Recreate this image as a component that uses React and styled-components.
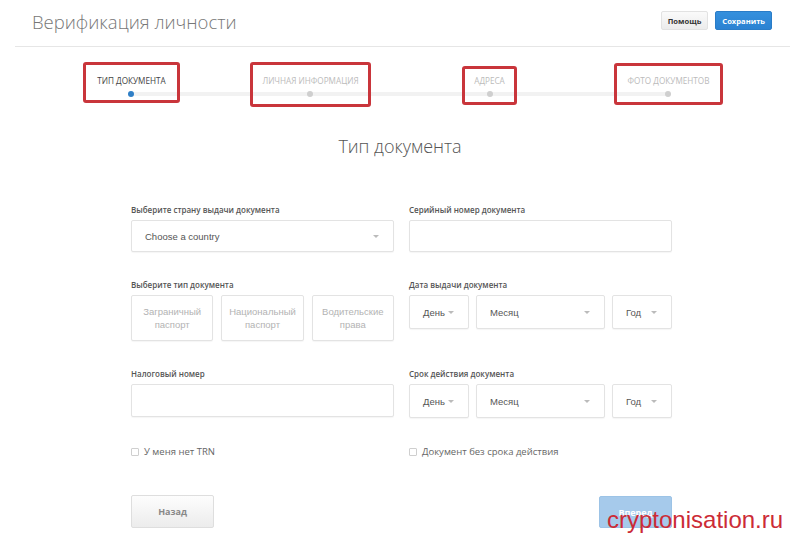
import styled, { createGlobalStyle } from 'styled-components';

const GlobalStyle = createGlobalStyle`
  html, body {
    margin: 0;
    padding: 0;
    background: #fff;
  }

  body {
    font-family: "Open Sans", "Noto Sans", sans-serif;
    color: #555;
  }

  * {
    box-sizing: border-box;
  }
`;

const Page = styled.div`
  position: relative;
  width: 800px;
  height: 546px;
  overflow: hidden;
`;

const Header = styled.header`
  display: flex;
  justify-content: space-between;
  align-items: flex-start;
  height: 47px;
  margin: 0 10px 0 15px;
  padding: 0 18px 0 17px;
  border-bottom: 1px solid #e6e6e6;
`;

const Title = styled.h1`
  margin: 0;
  padding-top: 9px;
  font-size: 18.5px;
  line-height: 26px;
  font-weight: 300;
  color: #777;
`;

const HeaderActions = styled.div`
  display: flex;
  gap: 7px;
  margin-top: 11px;
`;

const SmallButton = styled.button`
  height: 19px;
  padding: 0 ${({ $primary }) => ($primary ? '6px' : '6px')};
  border: 1px solid ${({ $primary }) => ($primary ? '#2a7cc7' : '#e2e2e2')};
  border-radius: 2px;
  background: ${({ $primary }) =>
    $primary ? 'linear-gradient(#3590dd, #2b82d2)' : 'linear-gradient(#fafafa, #ececec)'};
  color: ${({ $primary }) => ($primary ? '#fff' : '#333')};
  font-family: "Open Sans", sans-serif;
  font-size: 7.6px;
  font-weight: 700;
  cursor: pointer;
`;

const Steps = styled.ol`
  position: relative;
  display: flex;
  width: 716px;
  margin: 28px auto 0;
  padding: 0;
  list-style: none;

  &::before {
    content: '';
    position: absolute;
    left: 89px;
    right: 89px;
    top: 17px;
    height: 4px;
    background: #f2f2f2;
  }
`;

const Step = styled.li`
  flex: 1;
  display: flex;
  justify-content: center;
`;

const StepInner = styled.div`
  position: relative;
  display: flex;
  flex-direction: column;
  align-items: center;
  gap: 4px;
`;

const StepLabel = styled.span`
  font-size: 8.2px;
  line-height: 12px;
  text-transform: uppercase;
  white-space: nowrap;
  color: ${({ $active }) => ($active ? '#444' : '#bbb')};
`;

const StepDot = styled.span`
  position: relative;
  width: 6px;
  height: 6px;
  border-radius: 50%;
  background: ${({ $active }) => ($active ? '#2f7fc6' : '#cfcfcf')};
`;

const Annotation = styled.span`
  position: absolute;
  top: ${({ $top }) => $top}px;
  bottom: ${({ $bottom }) => $bottom}px;
  left: ${({ $side }) => $side}px;
  right: ${({ $side }) => $side}px;
  border: 3px solid #c9353b;
  border-radius: 3px;
  pointer-events: none;
`;

const Heading = styled.h2`
  margin: 37px 0 0;
  text-align: center;
  font-size: 18px;
  line-height: 24px;
  font-weight: 300;
  color: #555;
`;

const Form = styled.form`
  display: grid;
  grid-template-columns: 263px 263px;
  column-gap: 15px;
  row-gap: 27px;
  align-items: start;
  width: 544px;
  margin: 46px auto 0;
  padding-left: 3px;
`;

const Field = styled.div`
  display: flex;
  flex-direction: column;
`;

const Label = styled.label`
  margin-bottom: 4px;
  font-size: 8px;
  line-height: 12px;
  font-weight: 600;
  color: #555;
  white-space: nowrap;
`;

const Control = styled.div`
  display: flex;
  align-items: center;
  justify-content: space-between;
  height: ${({ $height }) => $height}px;
  padding: 0 14px 0 13px;
  border: 1px solid #e3e3e3;
  border-radius: 2px;
  background: #fff;
  box-shadow: 0 1px 1px rgba(0, 0, 0, 0.04);
  font-family: "Liberation Sans", Arial, sans-serif;
  font-size: 9.5px;
  color: #555;
`;

const Caret = styled.span`
  width: 0;
  height: 0;
  border-left: 3px solid transparent;
  border-right: 3px solid transparent;
  border-top: 3px solid #bbb;
`;

const TypeGroup = styled.div`
  display: grid;
  grid-template-columns: repeat(3, 1fr);
  gap: 8px;
`;

const TypeOption = styled.button`
  height: 46px;
  padding: 0 4px;
  border: 1px solid #e3e3e3;
  border-radius: 2px;
  background: #fff;
  box-shadow: 0 1px 1px rgba(0, 0, 0, 0.04);
  font-family: "Liberation Sans", Arial, sans-serif;
  font-size: 9.5px;
  line-height: 13px;
  color: #b3b3b3;
`;

const DateGroup = styled.div`
  display: grid;
  grid-template-columns: 60px 1fr 60px;
  column-gap: 7px;
`;

const CheckRow = styled.label`
  display: flex;
  align-items: center;
  gap: 5px;
  font-size: 9.5px;
  line-height: 14px;
  color: #666;
`;

const CheckBox = styled.span`
  width: 8px;
  height: 8px;
  border: 1px solid #cfcfcf;
  border-radius: 1px;
  background: #fff;
`;

const Actions = styled.div`
  grid-column: 1 / -1;
  display: flex;
  justify-content: space-between;
  align-items: flex-start;
  margin-top: 9px;
`;

const NavButton = styled.button`
  width: ${({ $primary }) => ($primary ? '73px' : '83px')};
  height: ${({ $primary }) => ($primary ? '32px' : '33px')};
  margin-top: ${({ $primary }) => ($primary ? '1px' : '0')};
  border: 1px solid ${({ $primary }) => ($primary ? '#9cc3e6' : '#dedede')};
  border-radius: 2px;
  background: ${({ $primary }) =>
    $primary ? '#a6caeb' : 'linear-gradient(#fdfdfd, #ececec)'};
  color: ${({ $primary }) => ($primary ? '#fff' : '#888')};
  font-family: "Open Sans", sans-serif;
  font-size: 9px;
  font-weight: 700;
`;

const Watermark = styled.span`
  position: absolute;
  left: 607px;
  top: 508px;
  font-family: "Liberation Sans", Arial, sans-serif;
  font-size: 24px;
  line-height: 24px;
  color: #cc2b36;
  pointer-events: none;
`;

const steps = [
  { title: 'Тип документа', top: -13, bottom: -6, side: -14 },
  { title: 'Личная информация', top: -13, bottom: -10, side: -12 },
  { title: 'Адреса', top: -9, bottom: -8, side: -12 },
  { title: 'Фото документов', top: -12, bottom: -8, side: -13 },
];

const DateSelect = () => (
  <DateGroup>
    <Control $height={34}>
      День <Caret />
    </Control>
    <Control $height={34}>
      Месяц <Caret />
    </Control>
    <Control $height={34}>
      Год <Caret />
    </Control>
  </DateGroup>
);

export default function App() {
  return (
    <Page>
      <GlobalStyle />
      <Header>
        <Title>Верификация личности</Title>
        <HeaderActions>
          <SmallButton>Помощь</SmallButton>
          <SmallButton $primary>Сохранить</SmallButton>
        </HeaderActions>
      </Header>

      <Steps>
        {steps.map((step, i) => (
          <Step key={step.title}>
            <StepInner>
              <StepLabel $active={i === 0}>{step.title}</StepLabel>
              <StepDot $active={i === 0} />
              <Annotation $top={step.top} $bottom={step.bottom} $side={step.side} />
            </StepInner>
          </Step>
        ))}
      </Steps>

      <Heading>Тип документа</Heading>

      <Form>
        <Field>
          <Label>Выберите страну выдачи документа</Label>
          <Control $height={32}>
            Choose a country <Caret />
          </Control>
        </Field>
        <Field>
          <Label>Серийный номер документа</Label>
          <Control $height={32} />
        </Field>

        <Field>
          <Label>Выберите тип документа</Label>
          <TypeGroup>
            <TypeOption type="button">Заграничный<br />паспорт</TypeOption>
            <TypeOption type="button">Национальный<br />паспорт</TypeOption>
            <TypeOption type="button">Водительские<br />права</TypeOption>
          </TypeGroup>
        </Field>
        <Field>
          <Label>Дата выдачи документа</Label>
          <DateSelect />
        </Field>

        <Field>
          <Label>Налоговый номер</Label>
          <Control $height={33} />
        </Field>
        <Field>
          <Label>Срок действия документа</Label>
          <DateSelect />
        </Field>

        <CheckRow>
          <CheckBox /> У меня нет TRN
        </CheckRow>
        <CheckRow>
          <CheckBox /> Документ без срока действия
        </CheckRow>

        <Actions>
          <NavButton type="button">Назад</NavButton>
          <NavButton type="button" $primary>Вперед</NavButton>
        </Actions>
      </Form>

      <Watermark>cryptonisation.ru</Watermark>
    </Page>
  );
}
